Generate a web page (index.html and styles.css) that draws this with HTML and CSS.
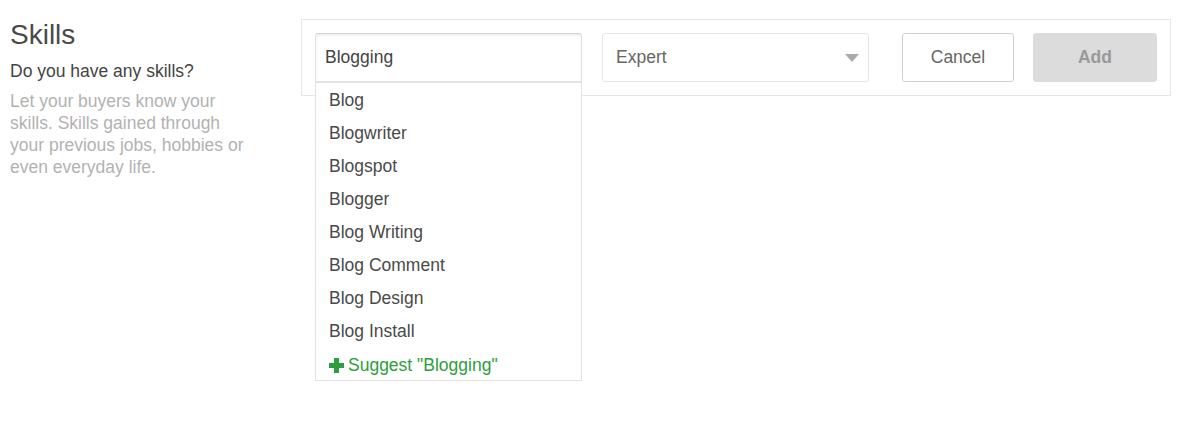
FILE: index.html
```html
<!DOCTYPE html>
<html lang="en">
<head>
    <meta charset="UTF-8">
    <meta name="viewport" content="width=device-width, initial-scale=1.0">
    <title>Skills</title>
    <link rel="stylesheet" href="styles.css">
</head>
<body>
    <div class="page">
        <div class="intro">
            <h1>Skills</h1>
            <p class="question">Do you have any skills?</p>
            <p class="hint">Let your buyers know your skills. Skills gained through your previous jobs, hobbies or even everyday life.</p>
        </div>

        <div class="panel">
            <div class="skill-field">
                <input type="text" class="skill-input" value="Blogging">
                <ul class="suggestions">
                    <li>Blog</li>
                    <li>Blogwriter</li>
                    <li>Blogspot</li>
                    <li>Blogger</li>
                    <li>Blog Writing</li>
                    <li>Blog Comment</li>
                    <li>Blog Design</li>
                    <li>Blog Install</li>
                    <li class="suggest">
                        <svg class="plus" width="15" height="15" viewBox="0 0 15 15"><path d="M5 0h5v5h5v5h-5v5H5v-5H0V5h5z" fill="#2c9e3b"/></svg>
                        Suggest "Blogging"
                    </li>
                </ul>
            </div>

            <div class="level-select">
                <span>Expert</span>
                <svg class="caret" width="14" height="8" viewBox="0 0 14 8"><path d="M0 0h14L7 8z" fill="#aaa"/></svg>
            </div>

            <button class="btn btn-cancel">Cancel</button>
            <button class="btn btn-add">Add</button>
        </div>
    </div>
</body>
</html>
```

FILE: styles.css
```css
html, body {
    min-height: 425px;
}
body {
    margin: 0;
    padding: 0;
    background: #fff;
    font-family: "Liberation Sans", Arial, sans-serif;
    color: #555;
}
.page {
    display: flex;
    align-items: flex-start;
    min-height: 406px;
    padding: 19px 16px 0 10px;
}
.intro {
    width: 240px;
    margin-right: 52px;
}
.intro h1 {
    margin: 0;
    font-size: 28px;
    font-weight: normal;
    line-height: 32px;
    color: #4a4a4a;
}
.question {
    margin: 9px 0 0;
    font-size: 17.5px;
    line-height: 22px;
    color: #444;
}
.hint {
    margin: 8px 0 0;
    font-size: 17.5px;
    line-height: 22px;
    color: #b2b2b2;
}
.panel {
    flex: 1;
    display: flex;
    align-items: stretch;
    border: 1px solid #e6e6e6;
    padding: 13px;
    height: 49px;
}
.skill-field {
    position: relative;
    width: 267px;
    margin-right: 20px;
}
.skill-input {
    box-sizing: border-box;
    width: 100%;
    height: 49px;
    margin: 0;
    padding: 0 9px;
    border: 1px solid #e2e2e2;
    border-top-color: #d2d2d2;
    border-radius: 3px 3px 0 0;
    box-shadow: inset 0 2px 2px rgba(0, 0, 0, 0.06);
    font-family: inherit;
    font-size: 17.5px;
    color: #444;
    outline: none;
}
.suggestions {
    position: absolute;
    top: 49px;
    left: 0;
    right: 0;
    margin: 0;
    padding: 0;
    list-style: none;
    background: #fff;
    border: 1px solid #e2e2e2;
    z-index: 2;
}
.suggestions li {
    height: 33px;
    line-height: 35px;
    padding: 0 13px;
    font-size: 17.5px;
    color: #4a4a4a;
}
.suggestions .suggest {
    display: flex;
    align-items: center;
    gap: 4px;
    padding-top: 3px;
    height: 30px;
    color: #2c9e3b;
}
.level-select {
    box-sizing: border-box;
    width: 267px;
    margin-right: 33px;
    display: flex;
    align-items: center;
    justify-content: space-between;
    padding: 0 9px 0 13px;
    border: 1px solid #e6e6e6;
    border-radius: 3px;
    font-size: 17.5px;
    color: #666;
}
.btn {
    box-sizing: border-box;
    height: 49px;
    border-radius: 3px;
    font-family: inherit;
    font-size: 17.5px;
    cursor: pointer;
}
.btn-cancel {
    width: 112px;
    margin-right: 19px;
    background: #fff;
    border: 1px solid #cfcfcf;
    color: #666;
}
.btn-add {
    width: 124px;
    background: #dcdcdc;
    border: 1px solid #dcdcdc;
    color: #999;
    font-weight: bold;
}
```
